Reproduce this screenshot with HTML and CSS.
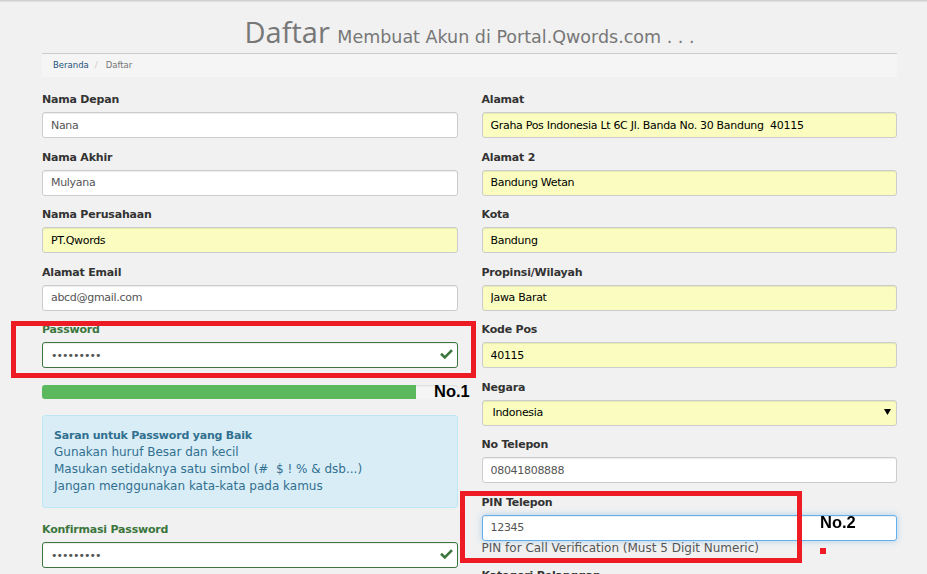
FILE: index.html
```html
<!DOCTYPE html>
<html lang="id">
<head>
  <meta charset="UTF-8">
  <meta name="viewport" content="width=device-width, initial-scale=1.0">
  <link rel="stylesheet" href="styles.css">
  <title>Daftar - Portal Qwords</title>
</head>
<body>

  <div class="topbar"></div>

  <div class="page">
    <h1 class="page-title">Daftar <small>Membuat Akun di Portal.Qwords.com . . .</small></h1>

    <div class="breadcrumb">
      <a href="#">Beranda</a><span class="sep">/</span><span class="active">Daftar</span>
    </div>

    <form class="signup">
      <!-- kolom kiri: data pribadi -->
      <div class="col">
        <div class="field">
          <label for="firstname">Nama Depan</label>
          <input class="control" type="text" id="firstname" value="Nana">
        </div>
        <div class="field">
          <label for="lastname">Nama Akhir</label>
          <input class="control" type="text" id="lastname" value="Mulyana">
        </div>
        <div class="field">
          <label for="company">Nama Perusahaan</label>
          <input class="control autofill" type="text" id="company" value="PT.Qwords">
        </div>
        <div class="field">
          <label for="email">Alamat Email</label>
          <input class="control" type="text" id="email" value="abcd@gmail.com">
        </div>
        <div class="field ok">
          <label for="password">Password</label>
          <div class="control-wrap">
            <input class="control secret" type="password" id="password" value="qwords123">
            <svg class="check" width="13" height="10" viewBox="0 0 13 10"><path d="M1 4.8 L4.8 8.4 L12 1.2" fill="none" stroke="#3c763d" stroke-width="2.6"/></svg>
          </div>
        </div>

        <div class="strength">
          <div class="strength-bar" style="width: 90%;"></div>
        </div>

        <div class="tips">
          <strong>Saran untuk Password yang Baik</strong><br>
          Gunakan huruf Besar dan kecil<br>
          Masukan setidaknya satu simbol (# &nbsp;$ ! % &amp; dsb...)<br>
          Jangan menggunakan kata-kata pada kamus
        </div>

        <div class="field ok">
          <label for="password2">Konfirmasi Password</label>
          <div class="control-wrap">
            <input class="control secret" type="password" id="password2" value="qwords123">
            <svg class="check" width="13" height="10" viewBox="0 0 13 10"><path d="M1 4.8 L4.8 8.4 L12 1.2" fill="none" stroke="#3c763d" stroke-width="2.6"/></svg>
          </div>
        </div>
      </div>

      <!-- kolom kanan: alamat & kontak -->
      <div class="col">
        <div class="field">
          <label for="address1">Alamat</label>
          <input class="control autofill" type="text" id="address1" value="Graha Pos Indonesia Lt 6C Jl. Banda No. 30 Bandung  40115">
        </div>
        <div class="field">
          <label for="address2">Alamat 2</label>
          <input class="control autofill" type="text" id="address2" value="Bandung Wetan">
        </div>
        <div class="field">
          <label for="city">Kota</label>
          <input class="control autofill" type="text" id="city" value="Bandung">
        </div>
        <div class="field">
          <label for="state">Propinsi/Wilayah</label>
          <input class="control autofill" type="text" id="state" value="Jawa Barat">
        </div>
        <div class="field">
          <label for="postcode">Kode Pos</label>
          <input class="control autofill" type="text" id="postcode" value="40115">
        </div>
        <div class="field">
          <label for="country">Negara</label>
          <div class="control-wrap">
            <select class="control autofill select" id="country">
              <option>Indonesia</option>
            </select>
            <svg class="caret" width="7" height="6" viewBox="0 0 7 6"><path d="M0 0 H7 L3.5 6 Z" fill="#000"/></svg>
          </div>
        </div>
        <div class="field">
          <label for="phone">No Telepon</label>
          <input class="control" type="text" id="phone" value="08041808888">
        </div>
        <div class="field">
          <label for="pin">PIN Telepon</label>
          <input class="control focused" type="text" id="pin" value="12345" autofocus>
          <p class="help">PIN for Call Verification (Must 5 Digit Numeric)</p>
        </div>
        <div class="field">
          <label for="category">Kategori Pelanggan</label>
          <input class="control" type="text" id="category">
        </div>
      </div>
    </form>
  </div>

  <!-- tanda anotasi di atas screenshot -->
  <div class="mark-box mark-box-1"></div>
  <div class="mark-label mark-label-1">No.1</div>
  <div class="mark-box mark-box-2"></div>
  <div class="mark-label mark-label-2">No.2</div>
  <div class="mark-dot"></div>

  <script>
    // taruh kursor di akhir PIN
    var pin = document.getElementById('pin');
    pin.focus();
    pin.setSelectionRange(pin.value.length, pin.value.length);
  </script>
</body>
</html>
```

FILE: styles.css
```css
body {
  margin: 0;
  background-color: #f1f1f1;
  font-family: "DejaVu Sans", Verdana, sans-serif;
  color: #333;
  position: relative;
  overflow: hidden;
}

.topbar {
  height: 2px;
  background: linear-gradient(#cbcbcb, #e4e4e4);
}

.page {
  width: 855px;
  margin-left: 42px;
}

.page-title {
  margin: 0;
  padding: 10px 0 1px;
  border-bottom: 1px solid #ccc;
  text-align: center;
  font-family: "Open Sans", sans-serif;
  font-weight: 400;
  font-size: 29px;
  line-height: 40px;
  color: #777;
}

.page-title small {
  font-family: "DejaVu Sans", Verdana, sans-serif;
  font-size: 17.5px;
  line-height: 1;
  color: #777;
}

.breadcrumb {
  height: 23px;
  line-height: 23px;
  padding: 0 11px;
  background-color: #f5f5f5;
  font-size: 8.5px;
}

.breadcrumb a {
  color: #23527c;
  text-decoration: none;
}

.breadcrumb .sep {
  padding: 0 8px 0 6px;
  color: #ccc;
}

.breadcrumb .active {
  color: #777;
}

.signup {
  display: grid;
  grid-template-columns: 1fr 1fr;
  column-gap: 24px;
  margin-top: 14px;
}

.field {
  margin-bottom: 10.5px;
}

.field label {
  display: block;
  margin-bottom: 3px;
  font-weight: bold;
  font-size: 11px;
  letter-spacing: -0.2px;
  line-height: 18px;
  color: #333;
}

.control {
  display: block;
  width: 100%;
  height: 26px;
  box-sizing: border-box;
  padding: 0 8px;
  border: 1px solid #ccc;
  border-radius: 3px;
  background-color: #fff;
  box-shadow: inset 0 1px 1px rgba(0, 0, 0, 0.075);
  font-family: "DejaVu Sans", Verdana, sans-serif;
  font-size: 11px;
  letter-spacing: -0.3px;
  color: #555;
  outline: none;
}

.control.autofill {
  background-color: #fafdbf;
  color: #000;
}

.control.select {
  -webkit-appearance: none;
  appearance: none;
  padding-left: 10px;
}

.control.focused {
  border-color: #66afe9;
  box-shadow: inset 0 1px 1px rgba(0, 0, 0, 0.075), 0 0 6px rgba(102, 175, 233, 0.5);
}

.control.secret {
  letter-spacing: -1px;
}

.control-wrap {
  position: relative;
}

.check {
  position: absolute;
  right: 5px;
  top: 7px;
}

.caret {
  position: absolute;
  right: 6px;
  top: 9px;
}

.field.ok label {
  color: #3c763d;
}

.field.ok .control {
  border-color: #3c763d;
}

.help {
  margin: -1px 0 0;
  font-size: 12px;
  line-height: 17px;
  color: #555;
}

.strength {
  height: 14px;
  margin: 17px 0 16px;
  background-color: #f5f5f5;
  border-radius: 3px;
  box-shadow: inset 0 1px 2px rgba(0, 0, 0, 0.1);
  overflow: hidden;
}

.strength-bar {
  height: 100%;
  background-color: #5cb85c;
}

.tips {
  margin-bottom: 13.6px;
  padding: 10.6px 11px 12.3px;
  border: 1px solid #bce8f1;
  border-radius: 3px;
  background-color: #d9edf7;
  color: #31708f;
  font-size: 12px;
  line-height: 16.7px;
}

.tips strong {
  font-size: 11px;
  letter-spacing: -0.2px;
}

/* anotasi merah */
.mark-box {
  position: absolute;
  box-sizing: border-box;
  border: 5px solid #ed1c24;
}

.mark-box-1 {
  left: 11px;
  top: 321px;
  width: 465px;
  height: 57px;
}

.mark-box-2 {
  left: 460px;
  top: 491px;
  width: 342px;
  height: 72px;
}

.mark-label {
  position: absolute;
  font-family: "Liberation Sans", Arial, sans-serif;
  font-weight: bold;
  font-size: 16.5px;
  line-height: 16px;
  color: #000;
}

.mark-label-1 {
  left: 434px;
  top: 383px;
}

.mark-label-2 {
  left: 820px;
  top: 514px;
}

.mark-dot {
  position: absolute;
  left: 820px;
  top: 548px;
  width: 6px;
  height: 6px;
  background-color: #ed1c24;
}
```
